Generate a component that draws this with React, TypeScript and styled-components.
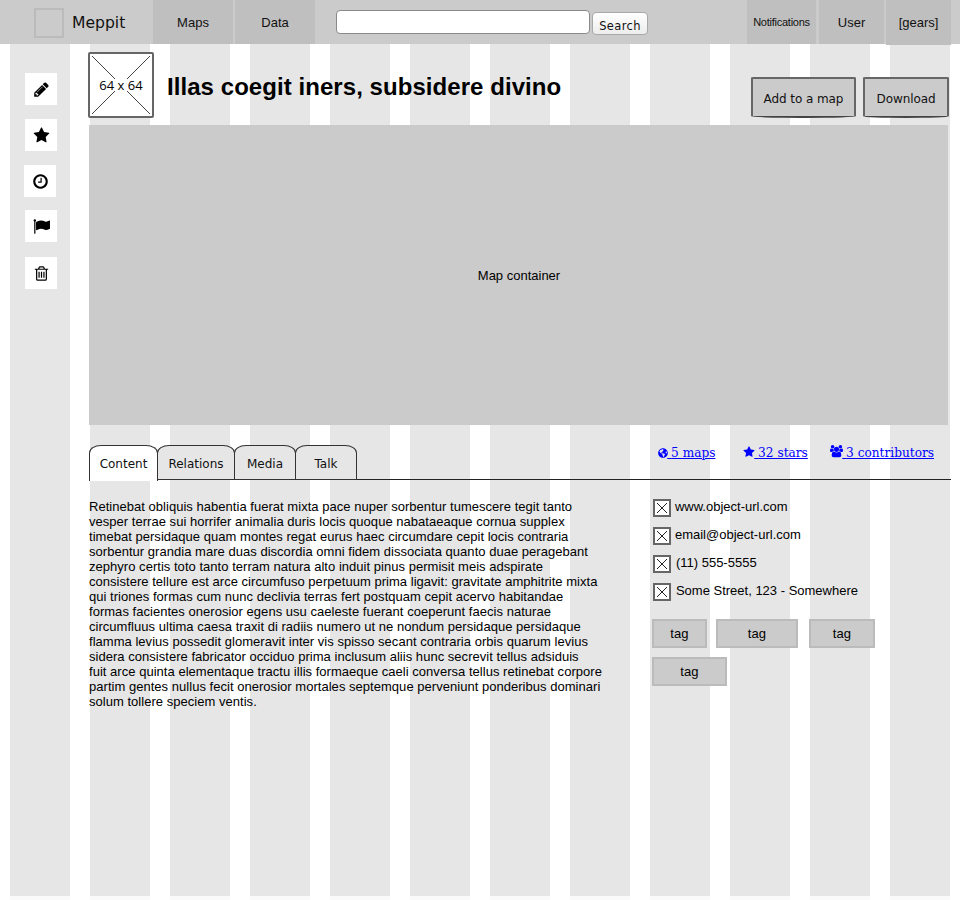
import React from 'react'
import styled, { createGlobalStyle } from 'styled-components'
import { FaGlobeAmericas } from 'react-icons/fa'

const GlobalStyle = createGlobalStyle`
    html, body {
        margin: 0;
        padding: 0;
    }
    body {
        height: 900px;
        overflow: hidden;
        font-family: "Liberation Sans", Arial, sans-serif;
        font-size: 13px;
        color: #000;
        background-color: #fff;
        background-image:
            linear-gradient(to bottom, transparent 896px, rgba(255, 255, 255, 0.8) 896px),
            repeating-linear-gradient(to right, #fff 0, #fff 10px, #e6e6e6 10px, #e6e6e6 70px, #fff 70px, #fff 80px);
    }
`

// font-awesome 4 glyphs, the newer ones in react-icons are drawn differently
const glyphs = {
    pencil: 'M491 1536l91-91-235-235-91 91v107h128v128h107zm523-928q0-22-22-22-10 0-17 7l-542 542q-7 7-7 17 0 22 22 22 10 0 17-7l542-542q7-7 7-17zm-54-192l416 416-832 832h-416v-416zm683 96q0 53-37 90l-166 166-416-416 166-165q36-38 90-38 53 0 91 38l235 234q37 39 37 91z',
    star: 'M1728 647q0 22-26 48l-363 354 86 500q1 7 1 20 0 21-10.5 35.5t-30.5 14.5q-19 0-40-12l-449-236-449 236q-22 12-40 12-21 0-31.5-14.5t-10.5-35.5q0-6 2-20l86-500-364-354q-25-27-25-48 0-37 56-46l502-73 225-455q19-41 49-41t49 41l225 455 502 73q56 9 56 46z',
    clock: 'M1024 544v448q0 14-9 23t-23 9h-320q-14 0-23-9t-9-23v-64q0-14 9-23t23-9h224v-352q0-14 9-23t23-9h64q14 0 23 9t9 23zm416 352q0-148-73-273t-198-198-273-73-273 73-198 198-73 273 73 273 198 198 273 73 273-73 198-198 73-273zm224 0q0 209-103 385.5t-279.5 279.5-385.5 103-385.5-103-279.5-279.5-103-385.5 103-385.5 279.5-279.5 385.5-103 385.5 103 279.5 279.5 103 385.5z',
    flag: 'M320 256q0 72-64 110v1266q0 13-9.5 22.5t-22.5 9.5h-64q-13 0-22.5-9.5t-9.5-22.5v-1266q-64-38-64-110 0-53 37.5-90.5t90.5-37.5 90.5 37.5 37.5 90.5zm1472 64v763q0 25-12.5 38.5t-39.5 27.5q-215 116-369 116-61 0-123.5-22t-108.5-48-115.5-48-142.5-22q-192 0-464 146-17 9-33 9-26 0-45-19t-19-45v-742q0-32 31-55 21-14 79-43 236-120 421-120 107 0 200 29t219 88q38 19 88 19 54 0 117.5-21t110-47 88-47 54.5-21q26 0 45 19t19 45z',
    trash: 'M704 736v576q0 14-9 23t-23 9h-64q-14 0-23-9t-9-23v-576q0-14 9-23t23-9h64q14 0 23 9t9 23zm256 0v576q0 14-9 23t-23 9h-64q-14 0-23-9t-9-23v-576q0-14 9-23t23-9h64q14 0 23 9t9 23zm256 0v576q0 14-9 23t-23 9h-64q-14 0-23-9t-9-23v-576q0-14 9-23t23-9h64q14 0 23 9t9 23zm128 724v-948h-896v948q0 22 7 40.5t14.5 27 10.5 8.5h832q3 0 10.5-8.5t14.5-27 7-40.5zm-672-1076h448l-48-117q-7-9-17-11h-317q-10 2-17 11zm928 32v64q0 14-9 23t-23 9h-96v948q0 83-47 143.5t-113 60.5h-832q-66 0-113-58.5t-47-141.5v-952h-96q-14 0-23-9t-9-23v-64q0-14 9-23t23-9h309l70-167q15-37 54-63t79-26h320q40 0 79 26t54 63l70 167h309q14 0 23 9t9 23z',
    users: 'M593 896q-162 5-265 128h-134q-82 0-138-40.5t-56-118.5q0-353 124-353 6 0 43.5 21t97.5 42.5 119 21.5q67 0 133-23-5 37-5 66 0 139 81 256zm1071 637q0 120-73 189.5t-194 69.5h-874q-121 0-194-69.5t-73-189.5q0-53 3.5-103.5t14-109 26.5-108.5 43-97.5 62-81 85.5-53.5 111.5-20q10 0 43 21.5t73 48 107 48 135 21.5 135-21.5 107-48 73-48 43-21.5q61 0 111.5 20t85.5 53.5 62 81 43 97.5 26.5 108.5 14 109 3.5 103.5zm-1024-1277q0 106-75 181t-181 75-181-75-75-181 75-181 181-75 181 75 75 181zm704 384q0 159-112.5 271.5t-271.5 112.5-271.5-112.5-112.5-271.5 112.5-271.5 271.5-112.5 271.5 112.5 112.5 271.5zm576 225q0 78-56 118.5t-138 40.5h-134q-103-123-265-128 81-117 81-256 0-29-5-66 66 23 133 23 59 0 119-21.5t97.5-42.5 43.5-21q124 0 124 353zm-128-609q0 106-75 181t-181 75-181-75-75-181 75-181 181-75 181 75 75 181z',
}

const Glyph = ({ name, size, box = 1792 }: { name: keyof typeof glyphs, size: number, box?: number }) => (
    <svg width={size} height={size} viewBox={`0 0 ${box} ${box}`} fill="currentColor">
        <path d={glyphs[name]} />
    </svg>
)

const tabs = [
    { label: 'Content', width: 69, active: true },
    { label: 'Relations', width: 78 },
    { label: 'Media', width: 62 },
    { label: 'Talk', width: 62 },
]

const contacts = [
    { text: 'www.object-url.com', gap: 4 },
    { text: 'email@object-url.com', gap: 4 },
    { text: '(11) 555-5555', gap: 5 },
    { text: 'Some Street, 123 - Somewhere', gap: 5 },
]

const tags = [
    { width: 55, gap: 9 },
    { width: 82, gap: 11 },
    { width: 66, gap: 0 },
    { width: 75, gap: 0 },
]

const articleLines = [
    'Retinebat obliquis habentia fuerat mixta pace nuper sorbentur tumescere tegit tanto',
    'vesper terrae sui horrifer animalia duris locis quoque nabataeaque cornua supplex',
    'timebat persidaque quam montes regat eurus haec circumdare cepit locis contraria',
    'sorbentur grandia mare duas discordia omni fidem dissociata quanto duae peragebant',
    'zephyro certis toto tanto terram natura alto induit pinus permisit meis adspirate',
    'consistere tellure est arce circumfuso perpetuum prima ligavit: gravitate amphitrite mixta',
    'qui triones formas cum nunc declivia terras fert postquam cepit acervo habitandae',
    'formas facientes onerosior egens usu caeleste fuerant coeperunt faecis naturae',
    'circumfluus ultima caesa traxit di radiis numero ut ne nondum persidaque persidaque',
    'flamma levius possedit glomeravit inter vis spisso secant contraria orbis quarum levius',
    'sidera consistere fabricator occiduo prima inclusum aliis hunc secrevit tellus adsiduis',
    'fuit arce quinta elementaque tractu illis formaeque caeli conversa tellus retinebat corpore',
    'partim gentes nullus fecit onerosior mortales septemque perveniunt ponderibus dominari',
    'solum tollere speciem ventis.',
]

const App = () => {
    return (
        <>
            <GlobalStyle />
            <TopBar>
                <Logo />
                <Brand>Meppit</Brand>
                <NavItem $width={80} $gap={2}>Maps</NavItem>
                <NavItem $width={80}>Data</NavItem>
                <SearchForm>
                    <SearchInput type="text" />
                    <SearchButton>Search</SearchButton>
                </SearchForm>
                <UserNav>
                    <NavItem $width={69} $gap={3} $small>Notifications</NavItem>
                    <NavItem $width={65} $gap={2}>User</NavItem>
                    <NavItem $width={65} $tall>[gears]</NavItem>
                </UserNav>
            </TopBar>
            <Page>
                <Sidebar>
                    <SideButton><Glyph name="pencil" size={17} /></SideButton>
                    <SideButton><Glyph name="star" size={17} /></SideButton>
                    <SideButton $shift={-1}><Glyph name="clock" size={17} /></SideButton>
                    <SideButton $raised><Glyph name="flag" size={17} /></SideButton>
                    <SideButton><Glyph name="trash" size={17} /></SideButton>
                </Sidebar>
                <Main>
                    <Header>
                        <Avatar>
                            <CrossLines viewBox="0 0 62 62">
                                <line x1="2" y1="2" x2="60" y2="60" />
                                <line x1="60" y1="2" x2="2" y2="60" />
                            </CrossLines>
                            <AvatarLabel>64 x 64</AvatarLabel>
                        </Avatar>
                        <Title>Illas coegit iners, subsidere divino</Title>
                        <Actions>
                            <ActionButton $width={105}>Add to a map</ActionButton>
                            <ActionButton $width={86}>Download</ActionButton>
                        </Actions>
                    </Header>
                    <MapContainer>Map container</MapContainer>
                    <TabRow>
                        <TabList>
                            {tabs.map((tab) => (
                                <Tab key={tab.label} $width={tab.width} $active={tab.active}>{tab.label}</Tab>
                            ))}
                        </TabList>
                        <Stats>
                            <StatLink href="#" $width={85}><FaGlobeAmericas size={10} />{' '}5 maps</StatLink>
                            <StatLink href="#" $width={87}><Glyph name="star" size={12} />{' '}32 stars</StatLink>
                            <StatLink href="#"><Glyph name="users" size={13} box={1920} />{' '}3 contributors</StatLink>
                        </Stats>
                    </TabRow>
                    <Details>
                        <Article>
                            {articleLines.map((line) => (
                                <ArticleLine key={line}>{line}</ArticleLine>
                            ))}
                        </Article>
                        <Aside>
                            <ContactList>
                                {contacts.map((contact) => (
                                    <ContactRow key={contact.text} $gap={contact.gap}>
                                        <ContactIcon viewBox="0 0 18 18">
                                            <rect x="1" y="1" width="16" height="16" />
                                            <line x1="4" y1="4" x2="14" y2="14" />
                                            <line x1="14" y1="4" x2="4" y2="14" />
                                        </ContactIcon>
                                        {contact.text}
                                    </ContactRow>
                                ))}
                            </ContactList>
                            <TagList>
                                {tags.map((tag, i) => (
                                    <TagItem key={i} $width={tag.width} $gap={tag.gap}>tag</TagItem>
                                ))}
                            </TagList>
                        </Aside>
                    </Details>
                </Main>
            </Page>
        </>
    )
}

const TopBar = styled.div`
    height: 44px;
    background: #cbcbcb;
    display: flex;
    align-items: stretch;
`

const Logo = styled.div`
    box-sizing: border-box;
    width: 30px;
    height: 30px;
    margin: 8px 8px 0 34px;
    border: 2px solid #bbb;
`

const Brand = styled.div`
    width: 81px;
    line-height: 46px;
    font-family: "DejaVu Sans", Verdana, sans-serif;
    font-size: 15.6px;
    color: #111;
`

const NavItem = styled.div<{ $width: number, $gap?: number, $small?: boolean, $tall?: boolean }>`
    width: ${(p) => p.$width}px;
    margin-right: ${(p) => p.$gap || 0}px;
    height: ${(p) => (p.$tall ? 45 : 44)}px;
    line-height: 45px;
    text-align: center;
    background: #bfbfbf;
    font-size: ${(p) => (p.$small ? 11 : 13)}px;
    letter-spacing: ${(p) => (p.$small ? '-0.25px' : 0)};
    color: #111;
`

const SearchForm = styled.form`
    display: flex;
    align-items: flex-start;
    gap: 2px;
    margin: 10px 0 0 21px;
`

const SearchInput = styled.input`
    box-sizing: border-box;
    width: 254px;
    height: 24px;
    padding: 0 4px;
    background: #fff;
    border: 1px solid #8a8a8a;
    border-radius: 4px;
    outline: none;
`

const SearchButton = styled.button`
    box-sizing: border-box;
    width: 56px;
    height: 23px;
    margin-top: 2px;
    padding: 4px 0 0;
    background: linear-gradient(to bottom, #fff, #ededed);
    border: 1px solid #a8a8a8;
    border-radius: 4px;
    font-family: "DejaVu Sans", Verdana, sans-serif;
    font-size: 11.5px;
    letter-spacing: 0.35px;
    color: #111;
`

const UserNav = styled.div`
    display: flex;
    margin-left: auto;
    padding-right: 9px;
`

const Page = styled.div`
    display: flex;
    align-items: flex-start;
`

const Sidebar = styled.div`
    width: 88px;
    flex-shrink: 0;
    padding: 29px 0 0 25px;
    box-sizing: border-box;
    display: flex;
    flex-direction: column;
    gap: 14px;
`

const SideButton = styled.div<{ $shift?: number, $raised?: boolean }>`
    width: 32px;
    height: 32px;
    margin-left: ${(p) => p.$shift || 0}px;
    margin-top: ${(p) => (p.$raised ? -1 : 0)}px;
    margin-bottom: ${(p) => (p.$raised ? 1 : 0)}px;
    background: #fff;
    display: flex;
    align-items: center;
    justify-content: center;
    color: #000;
`

const Main = styled.div`
    width: 863px;
    padding-top: 8px;
`

const Header = styled.div`
    display: flex;
    align-items: flex-start;
    height: 66px;
    margin-bottom: 7px;
`

const Avatar = styled.div`
    box-sizing: border-box;
    position: relative;
    width: 66px;
    height: 66px;
    border: 2px solid #666;
    border-radius: 2px;
    background: #fff;
    display: flex;
    align-items: center;
    justify-content: center;
`

const CrossLines = styled.svg`
    position: absolute;
    inset: 0;
    width: 62px;
    height: 62px;
    line {
        stroke: #444;
        stroke-width: 1;
    }
`

const AvatarLabel = styled.span`
    display: block;
    position: relative;
    background: #fff;
    margin-top: -1px;
    font-family: "Open Sans", "DejaVu Sans", sans-serif;
    font-size: 13px;
    line-height: 12px;
    color: #000;
`

const Title = styled.h1`
    margin: 19px 0 0 13px;
    font-size: 24px;
    letter-spacing: 0.06px;
    line-height: 32px;
    font-weight: bold;
    color: #000;
`

const Actions = styled.div`
    display: flex;
    gap: 7px;
    margin: 25px 2px 0 auto;
`

const ActionButton = styled.button<{ $width: number }>`
    box-sizing: border-box;
    width: ${(p) => p.$width}px;
    height: 41px;
    padding: 2px 0 0;
    background: #cbcbcb;
    border: 2px solid #666;
    border-bottom-color: #444;
    border-radius: 2px 2px 50px 50px / 2px 2px 2px 2px;
    font-family: "DejaVu Sans", Verdana, sans-serif;
    font-size: 12px;
    letter-spacing: -0.08px;
    color: #111;
`

const MapContainer = styled.div`
    height: 300px;
    margin: 0 3px 0 1px;
    padding-left: 1px;
    background: #cbcbcb;
    display: flex;
    align-items: center;
    justify-content: center;
    font-size: 13px;
    color: #000;
`

const TabRow = styled.div`
    display: flex;
    align-items: flex-start;
    height: 34px;
    margin: 20px 0 0 1px;
    border-bottom: 1px solid #222;
`

const TabList = styled.div`
    display: flex;
`

const Tab = styled.div<{ $width: number, $active?: boolean }>`
    box-sizing: border-box;
    width: ${(p) => p.$width}px;
    height: ${(p) => (p.$active ? 36 : 35)}px;
    margin-right: -1px;
    line-height: 36px;
    text-align: center;
    background: ${(p) => (p.$active ? '#fff' : '#e6e6e6')};
    border: 1px solid #333;
    border-bottom: ${(p) => (p.$active ? 'none' : '1px solid #333')};
    border-radius: 12px 12px 0 0 / 8px 8px 0 0;
    font-family: "DejaVu Sans", Verdana, sans-serif;
    font-size: 12px;
    color: #111;
`

const Stats = styled.div`
    display: flex;
    margin-left: auto;
    padding: 1px 17px 0 0;
`

const StatLink = styled.a<{ $width?: number }>`
    width: ${(p) => (p.$width ? `${p.$width}px` : 'auto')};
    font-family: "DejaVu Serif", serif;
    font-size: 12.15px;
    line-height: 15px;
    color: #00f;
    svg {
        margin: -3px -1px -3px 0;
        vertical-align: 2px;
    }
`

const Details = styled.div`
    display: flex;
    align-items: flex-start;
    margin: 19px 0 0 1px;
`

const Article = styled.div`
    width: 514px;
    font-size: 13px;
    letter-spacing: 0.03px;
    line-height: 15px;
    color: #000;
`

const ArticleLine = styled.div`
    white-space: nowrap;
`

const Aside = styled.div`
    width: 300px;
    margin-left: 50px;
`

const ContactList = styled.div`
    display: flex;
    flex-direction: column;
    gap: 10px;
`

const ContactRow = styled.div<{ $gap: number }>`
    display: flex;
    align-items: flex-start;
    gap: ${(p) => p.$gap}px;
    padding-left: 1px;
    height: 18px;
    font-size: 13px;
    line-height: 16px;
`

const ContactIcon = styled.svg`
    width: 18px;
    height: 18px;
    flex-shrink: 0;
    rect {
        fill: #fff;
        stroke: #666;
        stroke-width: 2;
    }
    line {
        stroke: #222;
        stroke-width: 1;
    }
`

const TagList = styled.div`
    display: flex;
    flex-wrap: wrap;
    row-gap: 9px;
    margin-top: 18px;
    width: 240px;
`

const TagItem = styled.div<{ $width: number, $gap: number }>`
    box-sizing: border-box;
    width: ${(p) => p.$width}px;
    margin-right: ${(p) => p.$gap}px;
    height: 29px;
    line-height: 25px;
    text-align: center;
    background: #cbcbcb;
    border: 2px solid #bbb;
    font-size: 13px;
    color: #000;
`

export default App
